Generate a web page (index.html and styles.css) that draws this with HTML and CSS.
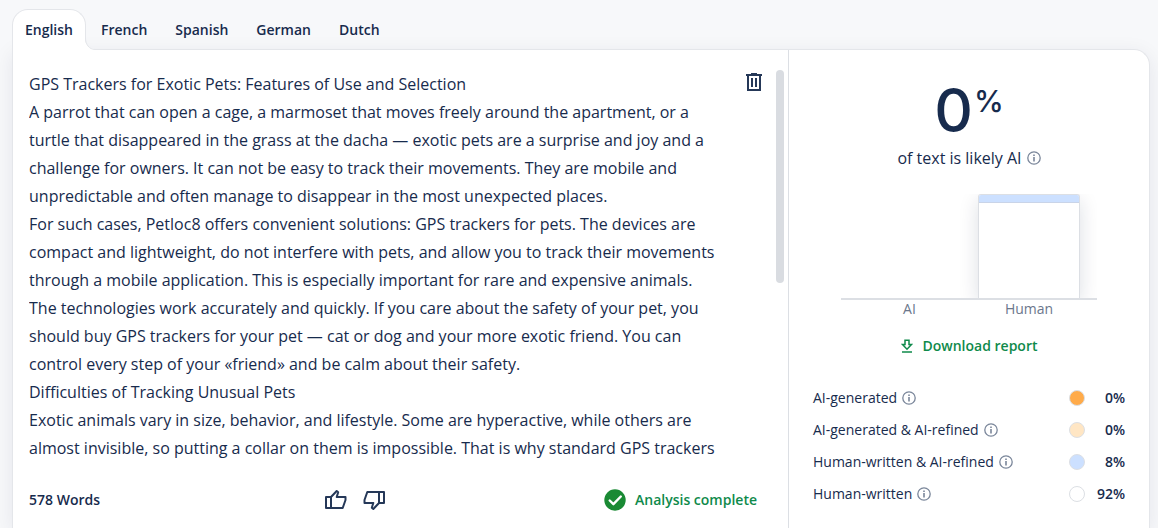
FILE: index.html
```html
<!DOCTYPE html>
<html lang="en">
<head>
<meta charset="utf-8">
<meta name="viewport" content="width=device-width, initial-scale=1">
<title>AI detector</title>
<link rel="stylesheet" href="styles.css">
</head>
<body>
<svg class="sprite" aria-hidden="true">
  <symbol id="info" viewBox="0 0 14 14">
    <circle cx="7" cy="7" r="6.2" fill="none" stroke="currentColor" stroke-width="1.3"/>
    <path d="M6.2 3.500h1.600V5H6.200zM6.200 6.100h1.600v4.300H6.200z" fill="currentColor"/>
  </symbol>
  <symbol id="thumb" viewBox="0 0 24 24">
    <path d="M2 9h5v11H2zM7 9L12.700 3L14.200 4.200L12.700 9H21.500V12L18.700 20H7Z" fill="none" stroke="currentColor" stroke-width="2" stroke-linejoin="round"/>
  </symbol>
</svg>
<main class="page">
  <nav class="tabs" aria-label="Language">
    <button class="tab tab-active" type="button" aria-pressed="true">English<svg class="tab-foot" viewBox="0 0 10 12" aria-hidden="true"><path class="foot-fill" d="M0 0C0 7 4 11 10 11V12H0Z"/><path class="foot-line" d="M.5 0C.5 6 4 11.500 10 11.500"/></svg></button>
    <button class="tab" type="button">French</button>
    <button class="tab" type="button">Spanish</button>
    <button class="tab" type="button">German</button>
    <button class="tab" type="button">Dutch</button>
  </nav>
  <div class="card">
    <section class="editor">
      <div class="editor-body">
        <textarea class="text" rows="14" spellcheck="false" aria-label="Text to analyse">GPS Trackers for Exotic Pets: Features of Use and Selection
A parrot that can open a cage, a marmoset that moves freely around the apartment, or a turtle that disappeared in the grass at the dacha — exotic pets are a surprise and joy and a challenge for owners. It can not be easy to track their movements. They are mobile and unpredictable and often manage to disappear in the most unexpected places.
For such cases, Petloc8 offers convenient solutions: GPS trackers for pets. The devices are compact and lightweight, do not interfere with pets, and allow you to track their movements through a mobile application. This is especially important for rare and expensive animals.
The technologies work accurately and quickly. If you care about the safety of your pet, you should buy GPS trackers for your pet — cat or dog and your more exotic friend. You can control every step of your «friend» and be calm about their safety.
Difficulties of Tracking Unusual Pets
Exotic animals vary in size, behavior, and lifestyle. Some are hyperactive, while others are almost invisible, so putting a collar on them is impossible. That is why standard GPS trackers</textarea>
        <button class="icon-button" type="button" aria-label="Delete text">
          <svg width="24" height="24" viewBox="0 0 24 24" fill="none" stroke="currentColor" stroke-width="2" aria-hidden="true"><path d="M4 5h16M9 4h6M6 5v15h12V5"/><path d="M10 8v9M14 8v9"/></svg>
        </button>
        <div class="scrollbar"><div class="scroll-thumb"></div></div>
      </div>
      <div class="editor-foot">
        <span class="words">578 Words</span>
        <div class="votes">
          <button class="icon-button" type="button" aria-label="Good result"><svg width="24" height="24" aria-hidden="true"><use href="#thumb"/></svg></button>
          <button class="icon-button" type="button" aria-label="Poor result"><svg class="flipped" width="24" height="24" aria-hidden="true"><use href="#thumb"/></svg></button>
        </div>
        <div class="status">
          <svg width="22" height="22" viewBox="0 0 22 22" aria-hidden="true"><circle cx="11" cy="11" r="10.700" fill="#1a8a34"/><path d="M5.700 11.500l3.700 3.700 7.400-7.700" fill="none" stroke="#fff" stroke-width="2.400" stroke-linecap="round" stroke-linejoin="round"/></svg>
          <span>Analysis complete</span>
        </div>
      </div>
    </section>
    <section class="report">
      <div class="score"><span class="score-number">0</span><span class="score-sign">%</span></div>
      <p class="caption">of text is likely AI <svg class="info" aria-hidden="true"><use href="#info"/></svg></p>
      <div class="chart">
        <div class="plot">
          <div class="bar"><div class="bar-refined" style="height:8%"></div></div>
        </div>
        <div class="axis"><span>AI</span><span>Human</span></div>
      </div>
      <button class="download" type="button">
        <svg width="12" height="14" viewBox="0 0 12 14" fill="none" stroke="currentColor" stroke-width="1.500" aria-hidden="true"><path d="M4 1.200h4v4.300h2.500L6 10.200 1.500 5.500H4zM1 13h10"/></svg>
        <span>Download report</span>
      </button>
      <ul class="legend">
        <li><span class="label">AI-generated <svg class="info" aria-hidden="true"><use href="#info"/></svg></span><span class="dot dot-ai"></span><span class="value">0%</span></li>
        <li><span class="label">AI-generated &amp; AI-refined <svg class="info" aria-hidden="true"><use href="#info"/></svg></span><span class="dot dot-ai-refined"></span><span class="value">0%</span></li>
        <li><span class="label">Human-written &amp; AI-refined <svg class="info" aria-hidden="true"><use href="#info"/></svg></span><span class="dot dot-human-refined"></span><span class="value">8%</span></li>
        <li><span class="label">Human-written <svg class="info" aria-hidden="true"><use href="#info"/></svg></span><span class="dot"></span><span class="value">92%</span></li>
      </ul>
    </section>
  </div>
</main>
</body>
</html>
```
FILE: styles.css
```css
* { box-sizing: border-box; }

body {
  margin: 0;
  background: #f7f8fa;
  color: #172b4d;
  font: 14px/20px "Open Sans", "Noto Sans", sans-serif;
}

button {
  margin: 0;
  padding: 0;
  border: 0;
  background: none;
  color: inherit;
  font: inherit;
  cursor: pointer;
}

svg { display: block; }

.sprite { display: none; }

.page {
  display: flex;
  flex-direction: column;
  min-height: 100vh;
  padding: 9px 8px 0 12px;
  overflow: hidden;
}

.tabs {
  position: relative;
  z-index: 1;
  display: flex;
  gap: 2px;
  margin-bottom: -1px;
}

.tab {
  position: relative;
  height: 41px;
  padding: 0 12px;
  border: 1px solid transparent;
  border-bottom: 0;
  font-weight: 600;
}

.tab-active {
  border-color: #e4e6ea;
  border-radius: 16px 16px 0 0;
  background: #fff;
}

.tab-foot {
  position: absolute;
  left: 100%;
  bottom: 0;
  width: 10px;
  height: 12px;
}

.foot-fill { fill: #fff; }

.foot-line { fill: none; stroke: #e4e6ea; }

.card {
  flex: 1;
  display: grid;
  grid-template-columns: minmax(0, 1fr) 361px;
  border: 1px solid #e4e6ea;
  border-bottom: 0;
  border-radius: 0 16px 0 0;
  background: #fff;
  box-shadow: 0 4px 20px rgba(9, 30, 66, 0.08);
}

.editor { padding: 20px 4px 16px 16px; }

.editor-body {
  display: grid;
  grid-template-columns: minmax(0, 1fr) 24px 8px;
  column-gap: 10px;
}

.text {
  display: block;
  width: 100%;
  margin: 0;
  padding: 0 10px 0 0;
  border: 0;
  outline: 0;
  overflow: hidden;
  resize: none;
  background: none;
  color: inherit;
  font: 16px/28px "Open Sans", "Noto Sans", sans-serif;
}

.icon-button {
  width: 24px;
  height: 24px;
  color: #253858;
}

.scroll-thumb {
  height: 213px;
  border-radius: 4px;
  background: #d9dce1;
}

.editor-foot {
  display: grid;
  grid-template-columns: 1fr auto 1fr;
  align-items: center;
  padding: 26px 27px 0 0;
  font-weight: 600;
}

.votes {
  display: flex;
  gap: 14px;
  margin-right: 76px;
}

.flipped { transform: rotate(180deg); }

.status {
  display: flex;
  align-items: center;
  justify-content: flex-end;
  gap: 9px;
  color: #0f8a4b;
}

.report {
  padding: 30px 24px 16px;
  border-left: 1px solid #dcdfe4;
}

.score {
  display: flex;
  justify-content: center;
  gap: 1px;
  font-family: Inter, "Open Sans", sans-serif;
}

.score-number { font-size: 60px; line-height: 60px; font-weight: 500; }

.score-sign { font-size: 30px; line-height: 42px; font-weight: 500; }

.caption {
  display: flex;
  align-items: center;
  justify-content: center;
  gap: 5px;
  margin: 8px 0 0;
  font-size: 16px;
  line-height: 20px;
}

.info {
  flex: none;
  width: 14px;
  height: 14px;
  color: #7a869a;
}

.chart { margin: 26px 28px 0; }

.plot {
  display: grid;
  justify-content: end;
  height: 106px;
  padding-right: 17px;
  border-bottom: 2px solid #dcdfe4;
  overflow: hidden;
}

.bar {
  width: 102px;
  height: 104px;
  border: 1px solid #dcdfe4;
  border-bottom: 0;
  border-radius: 3px 3px 0 0;
  background: #fff;
  box-shadow: 0 6px 20px rgba(9, 30, 66, 0.14);
}

.bar-refined {
  border-bottom: 1px solid #c9d4e8;
  border-radius: 2px 2px 0 0;
  background: #cce0ff;
}

.axis {
  display: grid;
  grid-template-columns: 1fr 102px;
  padding: 0 17px 0 0;
  color: #6b778c;
  line-height: 18px;
  text-align: center;
}

.download {
  display: flex;
  align-items: center;
  gap: 10px;
  margin: 18px auto 0;
  color: #0f8a4b;
  font-weight: 600;
}

.legend {
  display: grid;
  gap: 12px;
  margin: 32px 0 0;
  padding: 0;
  list-style: none;
}

.legend li {
  display: grid;
  grid-template-columns: 1fr 16px 32px;
  align-items: center;
  column-gap: 8px;
}

.label { display: flex; align-items: center; gap: 5px; }

.dot {
  width: 16px;
  height: 16px;
  border: 1px solid #dcdfe4;
  border-radius: 50%;
}

.dot-ai { background: #ffab4a; }

.dot-ai-refined { background: #ffe6c4; }

.dot-human-refined { background: #cce0ff; }

.value { font-weight: 600; text-align: right; }
```
